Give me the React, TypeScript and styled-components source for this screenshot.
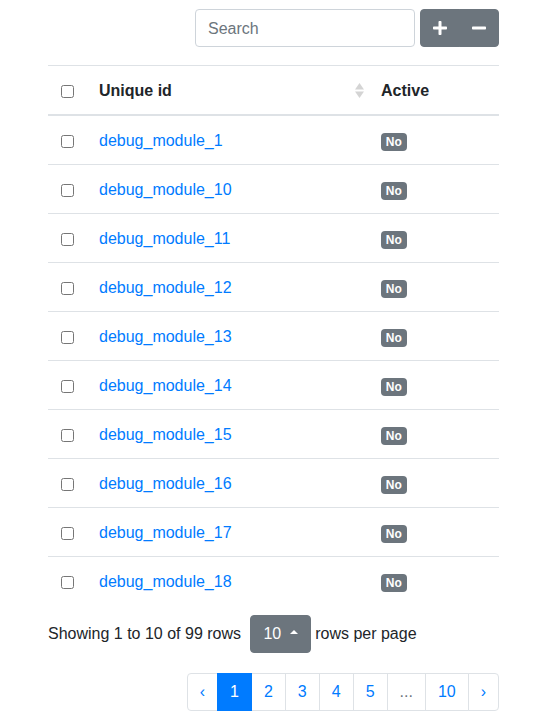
import React from "react";
import styled, { createGlobalStyle } from "styled-components";
import { FaPlus, FaMinus } from "react-icons/fa";

const GlobalStyle = createGlobalStyle`
  html, body { margin: 0; padding: 0; background: #fff; }
  body {
    font-family: "Liberation Sans", Arial, sans-serif;
    font-size: 16px;
    line-height: 1.5;
    color: #212529;
  }
  * { box-sizing: border-box; }
`;

const Page = styled.div`
  padding: 9px 35px 0 48px;
`;

const Toolbar = styled.div`
  display: flex;
  justify-content: flex-end;
  gap: 5px;
  margin-bottom: 18px;
`;

const SearchInput = styled.input`
  width: 220px;
  height: 38px;
  padding: 7px 12px 5px;
  font-family: inherit;
  font-size: 16px;
  line-height: 24px;
  color: #495057;
  border: 1px solid #ced4da;
  border-radius: 4px;
  outline: none;
  &::placeholder { color: #6c757d; }
`;

const BtnGroup = styled.div`
  display: flex;
`;

const Btn = styled.button<{ $pos?: "first" | "last" | "only" }>`
  display: inline-flex;
  align-items: center;
  height: 38px;
  padding: 6px 12px;
  font-family: inherit;
  font-size: 16px;
  line-height: 24px;
  color: #fff;
  background: #6c757d;
  border: 1px solid #6c757d;
  border-radius: ${(p) =>
    p.$pos === "first" ? "4px 0 0 4px" : p.$pos === "last" ? "0 4px 4px 0" : "4px"};
  margin-left: ${(p) => (p.$pos === "last" ? "-1px" : "0")};
  cursor: pointer;
`;

const PlusIcon = styled(FaPlus)`
  width: 14px;
  height: 16px;
  display: block;
`;

const MinusIcon = styled(FaMinus)`
  width: 14px;
  height: 16px;
  display: block;
`;

const Table = styled.table`
  width: 100%;
  border-collapse: collapse;
  table-layout: fixed;
`;

const Th = styled.th<{ $w?: number }>`
  ${(p) => (p.$w ? `width: ${p.$w}px;` : "")}
  padding: 13px 12px 11px;
  text-align: left;
  font-weight: bold;
  line-height: 24px;
  vertical-align: middle;
  border-top: 1px solid #dee2e6;
  border-bottom: 2px solid #dee2e6;
`;

const SortTh = styled(Th)`
  padding-right: 5px;
`;

const SortInner = styled.div`
  display: flex;
  align-items: center;
  justify-content: space-between;
`;

const Td = styled.td<{ $first?: boolean }>`
  padding: 13px 12px 11px;
  line-height: 24px;
  vertical-align: middle;
  white-space: nowrap;
  border-top: ${(p) => (p.$first ? "none" : "1px solid #dee2e6")};
`;

const CheckCell = styled.div`
  display: flex;
  justify-content: center;
  align-items: center;
  height: 24px;
`;

const Check = styled.input`
  width: 13px;
  height: 13px;
  margin: 0;
`;

const Link = styled.a`
  color: #007bff;
  text-decoration: none;
`;

const Badge = styled.span`
  display: inline-block;
  padding: 3px 4.8px;
  font-size: 12px;
  font-weight: bold;
  line-height: 1;
  color: #fff;
  background: #6c757d;
  border-radius: 4px;
  vertical-align: 0;
`;

const Footer = styled.div`
  display: flex;
  flex-direction: column;
  gap: 20px;
  padding-top: 10px;
`;

const Detail = styled.div`
  display: flex;
  align-items: center;
  white-space: pre;
`;

const Info = styled.span`
  line-height: 34px;
  margin-right: 5px;
`;

const Caret = styled.span`
  display: inline-block;
  margin-left: 4px;
  width: 0;
  height: 0;
  border-left: 4.8px solid transparent;
  border-right: 4.8px solid transparent;
  border-bottom: 4.8px solid #fff;
  position: relative;
  top: -2px;
`;

const PageList = styled.ul`
  display: flex;
  justify-content: flex-end;
  list-style: none;
  margin: 0;
  padding: 0;
`;

const PageLink = styled.li<{ $active?: boolean; $disabled?: boolean; $first?: boolean; $last?: boolean }>`
  display: block;
  padding: 8px 12px;
  line-height: 20px;
  margin-left: ${(p) => (p.$first ? "0" : "-1px")};
  border: 1px solid ${(p) => (p.$active ? "#007bff" : "#dee2e6")};
  background: ${(p) => (p.$active ? "#007bff" : "#fff")};
  color: ${(p) => (p.$active ? "#fff" : p.$disabled ? "#6c757d" : "#007bff")};
  position: relative;
  z-index: ${(p) => (p.$active ? 1 : 0)};
  border-radius: ${(p) => (p.$first ? "4px 0 0 4px" : p.$last ? "0 4px 4px 0" : "0")};
`;

const SortIcon = () => (
  <svg width="9" height="16" viewBox="0 0 9 16" style={{ display: "block" }}>
    <polygon points="4.5,0 9,6.5 0,6.5" fill="#d4d4d4" />
    <polygon points="0,8.5 9,8.5 4.5,15" fill="#d4d4d4" />
  </svg>
);

const rows = [1, 10, 11, 12, 13, 14, 15, 16, 17, 18].map((n) => `debug_module_${n}`);

const pages: { label: string; active?: boolean; disabled?: boolean }[] = [
  { label: "‹" },
  { label: "1", active: true },
  { label: "2" },
  { label: "3" },
  { label: "4" },
  { label: "5" },
  { label: "...", disabled: true },
  { label: "10" },
  { label: "›" },
];

export default function App() {
  return (
    <>
      <GlobalStyle />
      <Page>
        <Toolbar>
          <SearchInput placeholder="Search" />
          <BtnGroup>
            <Btn $pos="first"><PlusIcon /></Btn>
            <Btn $pos="last"><MinusIcon /></Btn>
          </BtnGroup>
        </Toolbar>
        <Table>
          <thead>
            <tr>
              <Th $w={39}>
                <CheckCell><Check type="checkbox" /></CheckCell>
              </Th>
              <SortTh $w={282}>
                <SortInner>
                  <span>Unique id</span>
                  <SortIcon />
                </SortInner>
              </SortTh>
              <Th>Active</Th>
            </tr>
          </thead>
          <tbody>
            {rows.map((r, i) => (
              <tr key={r}>
                <Td $first={i === 0}>
                  <CheckCell><Check type="checkbox" /></CheckCell>
                </Td>
                <Td $first={i === 0}>
                  <Link href="#">{r}</Link>
                </Td>
                <Td $first={i === 0}>
                  <Badge>No</Badge>
                </Td>
              </tr>
            ))}
          </tbody>
        </Table>
        <Footer>
          <Detail>
            <Info>Showing 1 to 10 of 99 rows </Info>
            <Btn $pos="only">10 <Caret /></Btn>
            <span> rows per page</span>
          </Detail>
          <PageList>
            {pages.map((p, i) => (
              <PageLink
                key={i}
                $active={p.active}
                $disabled={p.disabled}
                $first={i === 0}
                $last={i === pages.length - 1}
              >
                {p.label}
              </PageLink>
            ))}
          </PageList>
        </Footer>
      </Page>
    </>
  );
}
